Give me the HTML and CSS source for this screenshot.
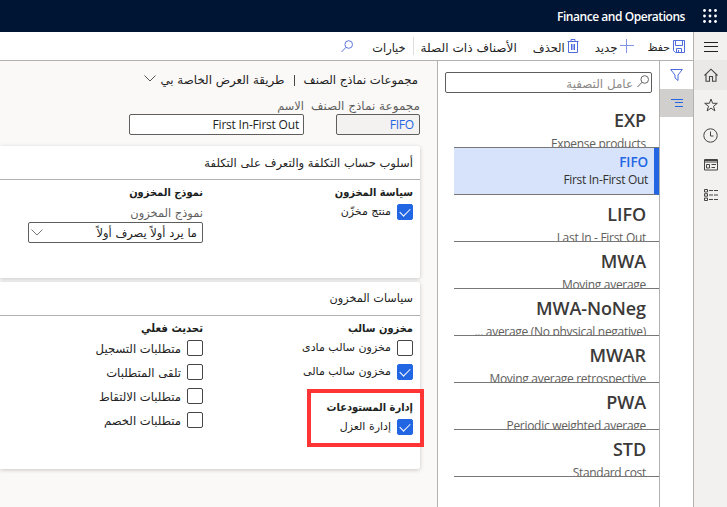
FILE: index.html
```
<!DOCTYPE html>
<html lang="ar" dir="rtl">
<head>
<meta charset="utf-8">
<title>Finance and Operations</title>
<link rel="stylesheet" href="styles.css">
</head>
<body>
<header class="topbar">
  <svg class="waffle" width="14" height="14" viewBox="0 0 14 14" fill="#fff"><circle cx="1.500" cy="1.500" r="1.400"/><circle cx="7" cy="1.500" r="1.400"/><circle cx="12.500" cy="1.500" r="1.400"/><circle cx="1.500" cy="7" r="1.400"/><circle cx="7" cy="7" r="1.400"/><circle cx="12.500" cy="7" r="1.400"/><circle cx="1.500" cy="12.500" r="1.400"/><circle cx="7" cy="12.500" r="1.400"/><circle cx="12.500" cy="12.500" r="1.400"/></svg>
  <span class="brand" dir="ltr">Finance and Operations</span>
</header>
<div class="shell">
  <nav class="nav">
    <a class="nav-item menu"><svg width="14" height="10" viewBox="0 0 14 10" stroke="#222" fill="none"><path d="M0 .5h14M0 4.500h14M0 9.500h14"/></svg></a>
    <a class="nav-item home"><svg width="14" height="14" viewBox="0 0 14 14" stroke="#444" stroke-width="1.100" fill="none"><path d="M.5 7.500 7 1.200l6.500 6.300M2 6.200v7h3.500V8.500h3v4.700H12v-7"/></svg></a>
    <a class="nav-item"><svg width="14" height="14" viewBox="0 0 14 14" stroke="#444" fill="none"><path d="m7 1 1.600 4.300h4.700L9.500 8.200l1.400 4.700L7 10.100l-3.900 2.800 1.400-4.700L.7 5.300h4.700z"/></svg></a>
    <a class="nav-item"><svg width="15" height="15" viewBox="0 0 15 15" stroke="#444" fill="none"><circle cx="7.500" cy="7.500" r="6.700"/><path d="M7.500 3.500v4.500h3"/></svg></a>
    <a class="nav-item"><svg width="14" height="12" viewBox="0 0 14 12" stroke="#444" fill="none"><path d="M.5.500h13v10.500H.5zM.5 1.500h13M.5 3h13M2.500 5.500h3v3.500h-3zM7.500 5.500H12M7.500 8.500h3.500"/></svg></a>
    <a class="nav-item"><svg width="14" height="12" viewBox="0 0 14 12" stroke="#444" fill="none"><path d="M.5.500h3v2.500h-3zM.5 4.700h3v2.500h-3zM.5 9h3v2.500h-3z"/><path d="M5 1.500h9M5 6h9M5 10.500h9" stroke-dasharray="4 1"/></svg></a>
  </nav>
  <div class="main">
    <div class="toolbar">
      <svg width="12" height="13" viewBox="0 0 12 13" stroke="#4f6bdc" fill="none"><path d="M.5.500h11v12H2.500l-2-2zM2.500.5v5h7v-5M3.500 12.500v-4h5v4M5.500 10v2.500"/></svg>
      <span class="t save">حفظ</span>
      <svg class="ic-plus" width="14" height="14" viewBox="0 0 14 14" stroke="#7f93e8" fill="none"><path d="M6.500 0v14M0 6.500h14"/></svg>
      <span class="t new">جديد</span>
      <svg class="ic-del" width="12" height="14" viewBox="0 0 12 14" stroke="#4f6bdc" fill="none"><path d="M.5 2.500h11M4 2.500v-2h4v2M1.500 2.500v11h9v-11M4.500 5v6M6 5v6M7.500 5v6"/></svg>
      <span class="t del">الحذف</span>
      <span class="t related">الأصناف ذات الصلة</span>
      <i class="sep"></i>
      <span class="t options">خيارات</span>
      <svg class="ic-find" width="12" height="13" viewBox="0 0 12 13" stroke="#5f75dc" fill="none"><circle cx="7.700" cy="4.500" r="3.800"/><path d="M5 7.300.5 12"/></svg>
    </div>
    <div class="content">
      <aside class="rail">
        <div class="rail-item"><svg width="13" height="12" viewBox="0 0 13 12" stroke="#4b6ae0" fill="none"><path d="M.7.500h11.600L8 6v5.500L5 9V6z"/></svg></div>
        <div class="rail-item on"><svg width="12" height="8" viewBox="0 0 12 8" stroke="#2266e3" fill="none"><path d="M0 .5h12M4 3.500h8M4 7.500h8"/></svg></div>
      </aside>
      <section class="list">
        <div class="search"><svg width="12" height="13" viewBox="0 0 12 13" stroke="#666" fill="none"><circle cx="7.700" cy="4.500" r="3.800"/><path d="M5 7.300.5 12"/></svg><span class="t filter">عامل التصفية</span></div>
        <ul class="rows" dir="ltr">
          <li class="row"><b>EXP</b><span>Expense products</span></li>
          <li class="row selected"><b>FIFO</b><span>First In-First Out</span></li>
          <li class="row"><b>LIFO</b><span>Last In - First Out</span></li>
          <li class="row"><b>MWA</b><span>Moving average</span></li>
          <li class="row"><b>MWA-NoNeg</b><span>... average (No physical negative)</span></li>
          <li class="row"><b>MWAR</b><span>Moving average retrospective</span></li>
          <li class="row"><b>PWA</b><span>Periodic weighted average</span></li>
          <li class="row"><b>STD</b><span>Standard cost</span></li>
        </ul>
      </section>
      <section class="form">
        <div class="crumbs"><span class="t c1">مجموعات نماذج الصنف</span><i class="bar"></i><span class="t c2">طريقة العرض الخاصة بي</span><svg width="12" height="7" viewBox="0 0 12 7" stroke="#555" fill="none"><path d="m.5.500 5.500 5.500 5.500-5.500"/></svg></div>
        <div class="fields">
          <label class="field group"><span class="t">مجموعة نماذج الصنف</span><span class="input ro" dir="ltr">FIFO</span></label>
          <label class="field name"><span class="t">الاسم</span><span class="input" dir="ltr">First In-First Out</span></label>
        </div>
        <article class="card one">
          <h2><span class="t">أسلوب حساب التكلفة والتعرف على التكلفة</span></h2>
          <div class="cols">
            <div class="col"><h3 class="t">سياسة المخزون</h3>
              <div class="check"><i class="box on"></i><span class="t">منتج مخزّن</span></div></div>
            <div class="col"><h3 class="t">نموذج المخزون</h3>
              <div class="lbl t">نموذج المخزون</div>
              <div class="select"><span class="t">ما يرد أولاً يصرف أولاً</span><svg width="12" height="7" viewBox="0 0 12 7" stroke="#777" fill="none"><path d="m.5.500 5.500 5.500 5.500-5.500"/></svg></div></div>
          </div>
        </article>
        <article class="card two">
          <h2><span class="t">سياسات المخزون</span></h2>
          <div class="cols">
            <div class="col"><h3 class="t">مخزون سالب</h3>
              <div class="check"><i class="box"></i><span class="t">مخزون سالب مادى</span></div>
              <div class="check"><i class="box on"></i><span class="t">مخزون سالب مالى</span></div>
              <div class="marked"><h3 class="t">إدارة المستودعات</h3>
              <div class="check"><i class="box on"></i><span class="t">إدارة العزل</span></div></div></div>
            <div class="col updates"><h3 class="t">تحديث فعلي</h3>
              <div class="check"><i class="box"></i><span class="t">متطلبات التسجيل</span></div>
              <div class="check"><i class="box"></i><span class="t">تلقى المتطلبات</span></div>
              <div class="check"><i class="box"></i><span class="t">متطلبات الالتقاط</span></div>
              <div class="check"><i class="box"></i><span class="t">متطلبات الخصم</span></div></div>
          </div>
        </article>
      </section>
    </div>
  </div>
</div>
</body>
</html>
```
FILE: styles.css
```
* { box-sizing: border-box; margin: 0; padding: 0; }
body { width: 727px; height: 507px; overflow: hidden; background: #fff; color: #222;
  font: 12px/16px "Open Sans", "DejaVu Sans", sans-serif; display: flex; flex-direction: column; }
svg { flex: none; display: block; }
.t { white-space: nowrap; font-family: "DejaVu Sans", sans-serif; font-size: 11px; flex: none; }
.topbar { height: 32px; background: #001433; display: flex; align-items: center; padding-right: 10px; flex: none; }
.brand { color: #fff; font-weight: 600; font-size: 12px; margin-right: 18px; letter-spacing: -.45px; padding-top: 2px; }
.shell { flex: 1; display: flex; min-height: 0; }
.nav { width: 34px; background: #f2f1f0; border-left: 1px solid #b5b3b1; flex: none; }
.nav-item { height: 30px; display: flex; align-items: center; justify-content: center; }
.nav-item.menu { height: 28px; padding-top: 2px; }
.nav-item.home { background: #eae9e8; }
.main { flex: 1; display: flex; flex-direction: column; min-width: 0; }
.toolbar { height: 29px; border-bottom: 1px solid #b3b1af; display: flex; align-items: center; padding-right: 8px; flex: none; }
.toolbar .t { padding-top: 3px; }
.toolbar .save { margin-right: 3px; font-size: 10.800px; }
.ic-plus { margin-right: 14px; }
.toolbar .new { margin-right: 2px; font-size: 11.800px; }
.ic-del { margin-right: 16px; }
.toolbar .del { margin-right: 2px; font-size: 11.400px; }
.toolbar .related { margin-right: 16px; font-size: 12.100px; }
.sep { width: 1px; height: 18px; background: #ddd; margin: 0 7px 0 7px; }
.toolbar .options { font-size: 11.400px; }
.ic-find { margin-right: 19px; }
.content { flex: 1; display: flex; min-height: 0; }
.rail { width: 34px; border-left: 1px solid #b3b1af; flex: none; }
.rail-item { height: 28px; display: flex; align-items: center; justify-content: center; }
.rail-item.on { background: #d0cfce; }
.list { width: 222px; border-left: 1px solid #b3b1af; padding: 11px 0 0; flex: none; }
.search { height: 21px; width: 207px; margin-right: 7px; border: 1px solid #605e5c; border-radius: 2px; display: flex; align-items: center; padding-right: 2px; }
.search svg { margin-top: -2px; }
.search .filter { color: #8a8886; margin-right: 4px; font-size: 11.900px; padding-top: 2px; }
.rows { list-style: none; width: 205px; margin-right: 0; margin-top: 8px; }
.row { height: 47px; border-bottom: 1px solid #797775; text-align: right; padding: 6px 13px 0 0; overflow: hidden; display: flex; flex-direction: column; white-space: nowrap; }
.row b { font-size: 18px; line-height: 27px; font-weight: 600; color: #3b3a39; flex: none; letter-spacing: -.1px; }
.row span { font-size: 12px; line-height: 16px; color: #605e5c; flex: none; margin-top: 2px; letter-spacing: -.3px; }
.row.selected { background: #d6e3fb; border-right: 5px solid #2266e3; padding: 5px 6px 0 0; }
.row.selected b { color: #2266e3; font-size: 13.500px; line-height: 18px; }
.row.selected span { color: #323130; margin-top: 1px; }
.form { flex: 1; min-width: 0; background: #faf9f8; padding-right: 17px; }
.crumbs { height: 38px; display: flex; align-items: center; padding-right: 2px; }
.crumbs .c1 { font-size: 11.700px; }
.crumbs .c2 { font-size: 11.850px; }
.bar { width: 1px; height: 11px; background: #444; margin: 0 9px; }
.crumbs svg { margin: -3px 4px 0 0; }
.fields { display: flex; height: 47px; }
.field { display: flex; flex-direction: column; }
.field .t { height: 15px; line-height: 15px; color: #605e5c; font-size: 11.400px; }
.field.group .t { font-size: 12px; }
.group { width: 84px; margin-left: 32px; }
.name { width: 175px; }
.input { height: 21px; border: 1px solid #605e5c; border-radius: 2px; background: #fff; line-height: 20px; text-align: right; padding-right: 4px; letter-spacing: -.2px; }
.ro { background: #f3f2f1; color: #2266e3; padding-right: 5px; }
.card { background: #fff; border-radius: 0 2px 2px 0; box-shadow: 0 1px 4px rgba(0,0,0,.2); }
.one { height: 132px; margin-bottom: 4px; }
.two { height: 187px; }
.card h2 { height: 34px; border-bottom: 1px solid #b3b1af; font-weight: 400; padding-right: 7px; display: flex; align-items: center; }
.one h2 .t { font-size: 11.550px; }
.two h2 .t { font-size: 11.250px; }
.cols { display: grid; grid-template-columns: 210px 175px; padding: 5px 7px 0 0; }
.col h3 { font-family: "DejaVu Sans Condensed", "DejaVu Sans", sans-serif; font-stretch: condensed; font-weight: 700; height: 19px; line-height: 16px; color: #201f1e; }
.col.updates h3 { font-size: 11.300px; }
.check { height: 24px; display: flex; align-items: flex-start; }
.check .t { margin-right: 6px; line-height: 16px; }
.updates .check .t { font-size: 11.650px; line-height: 18px; }
.box { width: 16px; height: 16px; border: 1px solid #484644; border-radius: 2px; flex: none; }
.box.on { background: #2266e3; border-color: #2266e3; }
.box.on::after { content: ""; display: block; width: 9px; height: 5px; border: solid #fff; border-width: 0 0 1px 1px; transform: rotate(-45deg); margin: 3px 2px; }
.lbl { color: #605e5c; height: 18px; line-height: 18px; font-size: 11.450px; }
.select { height: 21px; border: 1px solid #605e5c; border-radius: 2px; display: flex; align-items: center; justify-content: space-between; padding: 0 5px 0 2px; }
.select .t { font-size: 11.450px; }
.marked { width: 117px; height: 58px; border: 4px solid #ff3434; margin: 1px -11px 0 0; padding: 7px 7px 0 0; }
```
